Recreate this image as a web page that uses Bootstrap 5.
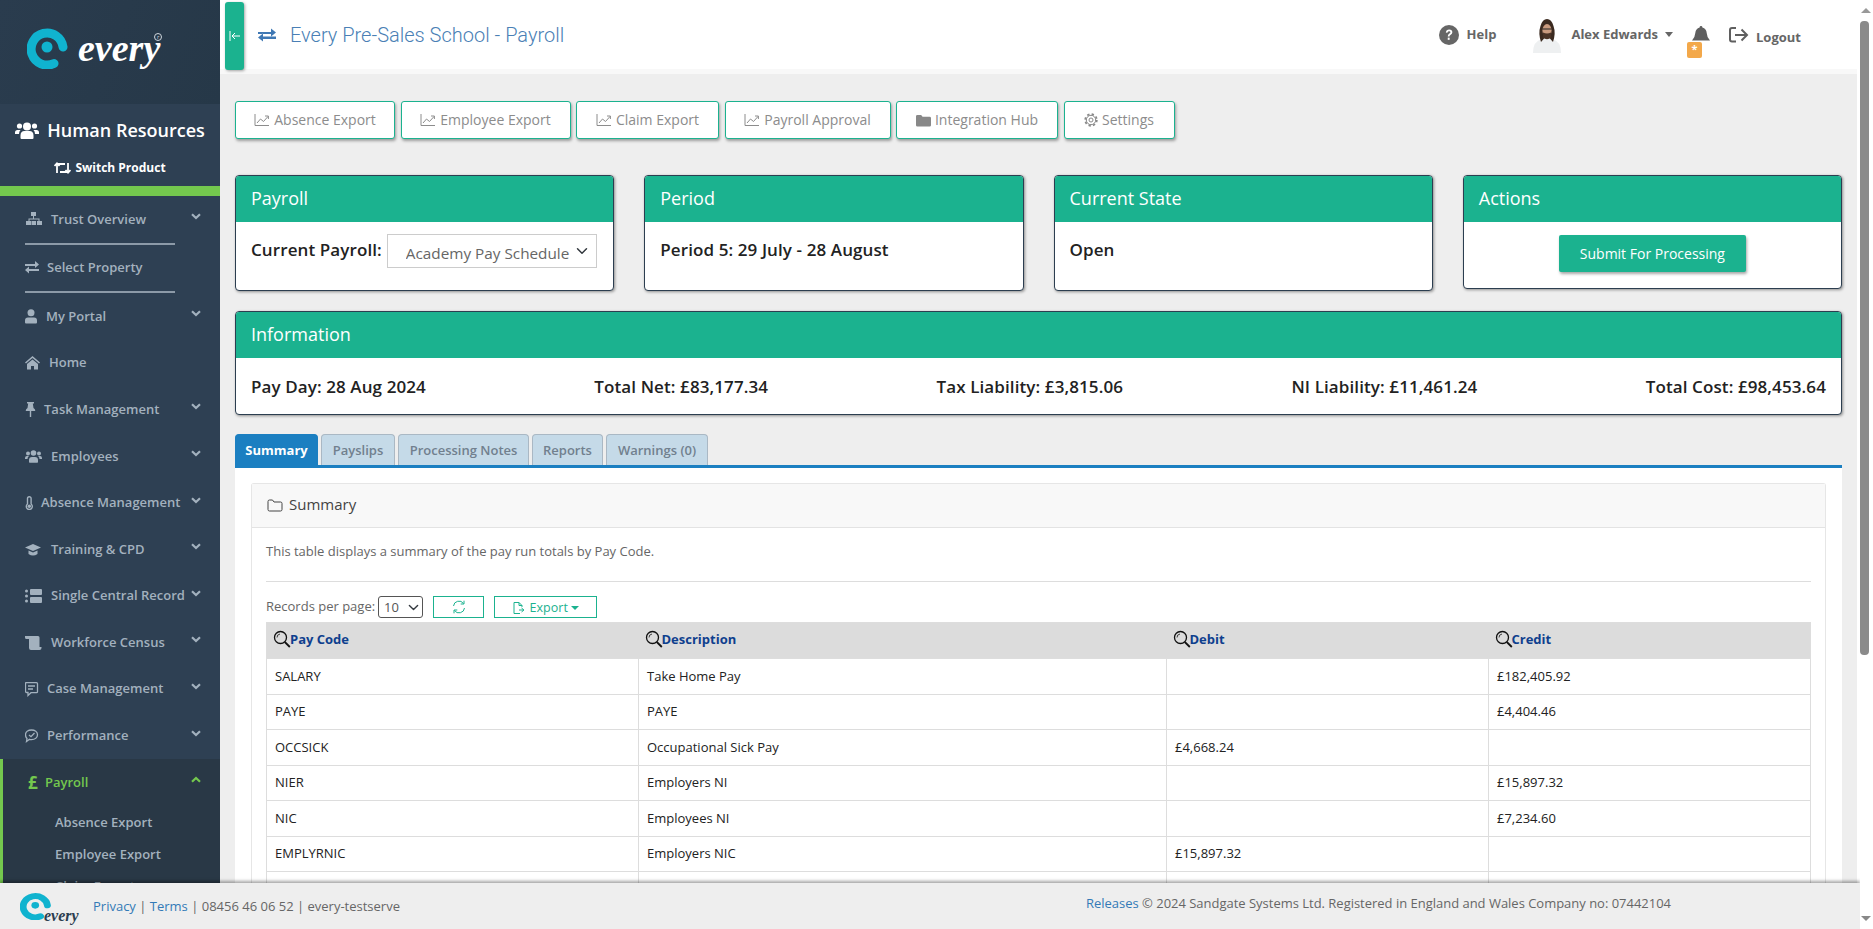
<!DOCTYPE html>
<html lang="en">
<head>
<meta charset="utf-8">
<title>Payroll</title>
<link href="https://cdn.jsdelivr.net/npm/bootstrap@5.3.0/dist/css/bootstrap.min.css" rel="stylesheet">
<style>
html,body{height:100%;overflow:hidden}
body{font-family:"Open Sans","Liberation Sans",sans-serif;background:#fff;color:#333}
.shell{height:929px}
.app{width:1860px;height:929px}
.upper{height:883px;overflow:hidden}
.sbar{width:13px;background:#fff;position:relative}
.sb-up,.sb-dn{width:0;height:0;border-left:5px solid transparent;border-right:5px solid transparent;position:absolute;left:1px}
.sb-up{top:8px;border-bottom:5px solid #999}
.sb-dn{bottom:8px;border-top:5px solid #888}
.sb-th{position:absolute;left:0;top:21px;width:9px;height:634px;background:#8a8a8a;border-radius:4px}
.side{width:220px;background:#2e4053;flex:none}
.brand{height:104px;background:linear-gradient(110deg,#2a3c4e,#263848);padding:27px 0 0 27px}
.brand-t{font-family:"Liberation Serif",serif;font-style:italic;font-weight:700;font-size:38px;color:#fff;line-height:1;margin-left:9px;margin-top:2px}
.brand-r{font-size:6px;color:#cfd6dc;margin:6px 0 0 -6px;border:1px solid #cfd6dc;border-radius:50%;width:8px;height:8px;line-height:6px;text-align:center}
.prod{height:82px;text-align:center;color:#fff}
.prod-h{font-size:18px;font-weight:600;padding-top:11px;line-height:30px}
.prod-s{font-size:12px;font-weight:700;line-height:16px;margin-top:15px}
.gbar{height:10px;background:#74c84e}
.ni{height:46.6px;padding-left:25px;color:#a3b1be;font-size:13px;font-weight:600;position:relative}
.ni svg{flex:none}
.ni .chv{position:absolute;left:191px;top:17px}
.nrule{height:2px;width:150px;margin-left:25px;background:#8c9aa8}
.ni-act{background:#293846;border-left:3px solid #74c84e;height:200px}
.ni-act .ni{padding-left:25px;color:#74c84e}
.ni-act .chv{left:188px}
.pound{font-size:17px;font-weight:700;width:17px;margin-right:0}
.sub-i{padding-left:52px;height:32px;line-height:32px;font-size:13px;font-weight:600;color:#a3b1be}
.mainc{background:#eee;position:relative;margin-right:4px}
.topb{height:74px;background:#fff;border-bottom:5px solid #f8f8f8;padding-right:56px}
.tog{width:19px;height:68px;margin:2px 0 0 5px;background:#1bb28f;border-radius:3px;box-shadow:1px 1px 3px rgba(0,0,0,.35);border:0;padding:0}
.xch-i{color:#3f78b4;margin-left:14px}
.ttl{font-family:Roboto,"Liberation Sans",sans-serif;font-weight:300;font-size:20px;color:#4a7fb5;margin-left:14px;line-height:1}
.tp-t{font-size:13px;font-weight:700;color:#666}
.m-help{margin-right:36px}
.m-av{margin-right:9px}
.m-user{margin-right:19px}
.m-bell{margin-right:19px;position:relative}
.bdg{position:absolute;left:-5px;top:16px;width:15px;height:16px;background:#f3a84a;border-radius:2px;color:#fff;font-size:11px;font-weight:700;line-height:14px;text-align:center}
.caret-d{width:0;height:0;border-left:4px solid transparent;border-right:4px solid transparent;border-top:5px solid #666;margin-left:7px}
.logout-t{margin-left:7px;padding-top:7px}
.bodyw{padding:0 15px}
.actrow{padding-top:27px;height:101px}
.abtn{background:#fff;border:1px solid #1bb28f;border-radius:3px;box-shadow:1px 2px 3px rgba(0,0,0,.35);color:#8c8c8c;font-size:14px;height:38px;padding:0;line-height:34px;margin-right:5.5px;flex:none}
.abtn svg{margin-right:4px;vertical-align:-2px}
.w1{width:160px}.w2{width:170px}.w3{width:143px}.w4{width:166px}.w5{width:162px}.w6{width:111px}
.crow{--bs-gutter-x:30px}
.pcard{border:1px solid #2c3e50;border-radius:4px;box-shadow:1px 1px 3px rgba(0,0,0,.4);overflow:hidden;background:#fff}
.pcard .card-header{background:#1bb28f;color:#fff;border:0;border-radius:0;height:46px;padding:0 15px;font-size:18px;line-height:44px}
.pcard .card-body{padding:16px 15px 0;font-size:17px;font-weight:600;color:#222;line-height:24px;height:68px;letter-spacing:.1px}
.pcard .act-b{height:66px;padding:13px 0 0;text-align:center}
.lbl{margin-right:5px}
.psel{width:210px;height:34px;border:1px solid #ccc;border-radius:0;padding:5px 0 1px 18px;font-size:15.3px;font-weight:400;color:#666;background-position:right 8px center;background-size:12px;letter-spacing:0;margin-top:-4px;line-height:24px;flex:none}
.subbtn{background:#1bb28f;color:#fff;border:0;border-radius:2px;width:187px;height:37px;font-size:14px;font-weight:500;box-shadow:1px 2px 3px rgba(0,0,0,.35);padding:0}
.infoc{margin-top:20px}
.infoc .card-body{height:56px;padding-top:17px}
.tabsw{margin-top:19px;border-bottom:3px solid #1b7fc1;height:34px;gap:3px}
.tabi{height:31px;background:#c5dae8;border:1px solid #aab8c4;border-bottom:0;border-radius:4px 4px 0 0;color:#71808e;font-size:13px;font-weight:600;line-height:30px;text-align:center}
.tabi.on{background:#1b7fc1;color:#fff;font-weight:700;border-color:#1b7fc1}
.t1{width:83px}.t2{width:74px}.t3{width:131px}.t4{width:71px}.t5{width:102px}
.panew{background:#fff;padding:15px 16px 0;height:600px}
.ipanel{border:1px solid #e6e6e6;border-radius:3px 3px 0 0;border-bottom:0}
.ipanel .card-header{height:44px;background:#f8f8f8;border-bottom:1px solid #e3e3e3;padding:0 15px;font-size:15px;font-weight:500;color:#444;line-height:41px;border-radius:0}
.ipanel .card-header svg{margin-right:6px;vertical-align:-2px}
.ipanel .card-body{padding:14px 14px 0}
.intro{font-size:13px;color:#666;line-height:18px;margin:0 0 21px}
.ihr{margin:0 0 14px;border-top:1px solid #ddd;opacity:1}
.tool{font-size:13px;color:#666;height:22px;margin-bottom:4px}
.rsel{width:45px;height:22px;border:1px solid #555;border-radius:3px;padding:0 0 0 5px;font-size:13px;color:#555;background-position:right 3px center;background-size:11px;margin-left:3px;line-height:18px}
.tbtn{height:22px;background:#fff;border:1px solid #1bb28f;border-radius:0;color:#1bb28f;font-size:12.5px;padding:0;line-height:19px}
.tb1{width:51px;margin-left:10px}.tb2{width:103px;margin-left:10px}
.tcarg{width:0;height:0;border-left:4px solid transparent;border-right:4px solid transparent;border-top:4px solid #1bb28f;display:inline-block;vertical-align:2px;margin-left:3px}
.ptable{table-layout:fixed;width:1544px;margin:0;font-size:13px;border:1px solid #ddd;--bs-table-border-color:#ddd}
.ptable th{background:#dcdcdc;height:36px;padding:0 8px 2px;font-weight:700;color:#0f3f8e;vertical-align:middle;border:0}
.ptable th svg{vertical-align:-4px;margin:0 -1px 0 -2px}
.ptable td{height:35.5px;padding:0 8px;color:#222;vertical-align:middle;border:1px solid #ddd}
.c1{width:372px}.c2{width:528px}.c3{width:322px}.c4{width:322px}
.foot{height:46px;background:#eee;box-shadow:0 -2px 3px rgba(0,0,0,.35);position:relative;font-size:13px;color:#666;padding:0 189px 4px 20px}
.foot a{color:#337ab7;text-decoration:none}
.fring{margin-top:4px}
.flogo-t{font-family:"Liberation Serif",serif;font-style:italic;font-weight:700;font-size:16px;color:#2c3e50;line-height:1;margin:24px 0 0 -8px;width:38px}
.fleft{margin:5px 0 0 11px}
.rtxt{font-size:12.98px}
</style>
</head>
<body>
<svg width="0" height="0" class="d-block">
<defs>
<symbol id="chv" viewBox="0 0 10 7"><path d="M1 1.2 5 5 9 1.2" fill="none" stroke="currentColor" stroke-width="2.2"/></symbol>
<symbol id="chart" viewBox="0 0 16 14"><path d="M1 1v11.5h14" fill="none" stroke="currentColor"/><path d="M3 10l3.5-4 3 2.5L14 3.5M11 3h3.4v3" fill="none" stroke="currentColor"/></symbol>
<symbol id="xch" viewBox="0 0 18 16"><path d="M0 5h13V1.5L18 5.5l-5 4V7H0zM18 9.5H5V6.5L0 10.500l5 4V12h13z" fill="currentColor"/></symbol>
<symbol id="mag" viewBox="0 0 18 18"><circle cx="7.500" cy="7.500" r="6" fill="none" stroke="#111" stroke-width="1.300"/><path d="M11.800 12l5 5" stroke="#111" stroke-width="1.800"/><path d="M4 7.500a3.500 3.500 0 0 1 3-3.500" fill="none" stroke="#111" stroke-width=".8"/></symbol>
<symbol id="folder" viewBox="0 0 16 13"><path d="M1 2.500q0-1.500 1.500-1.500h3l1.500 2h6.500q1.500 0 1.500 1.500v6q0 1.500-1.500 1.500h-11Q1 12 1 10.500z" fill="none" stroke="currentColor"/></symbol>
</defs>
</svg>
<div class="d-flex shell">
<div class="app d-flex flex-column">
<div class="upper d-flex">
<aside class="side">
<div class="brand d-flex align-items-start">
<svg width="42" height="42" viewBox="0 0 42 42"><path d="M27 36.500A16 16 0 1 1 36 20" fill="none" stroke="#10b3cf" stroke-width="9" stroke-linecap="round"/><circle cx="20" cy="20" r="5.500" fill="#10b3cf"/></svg>
<div class="brand-t">every</div><div class="brand-r">r</div>
</div>
<div class="prod">
<div class="prod-h d-flex align-items-center justify-content-center gap-2"><svg width="24" height="18" viewBox="0 0 24 18" fill="#fff"><circle cx="12" cy="5.500" r="4"/><circle cx="4.500" cy="5" r="2.600"/><circle cx="19.500" cy="5" r="2.600"/><path d="M5.500 17v-2.500q0-4.500 4-4.500h5q4 0 4 4.500V17q0 1-1 1h-11q-1 0-1-1zM0 13v-1.500q0-2.500 2.500-2.500h3q-1.500 1.500-1.500 4zM24 13v-1.500q0-2.500-2.500-2.500h-3q1.500 1.500 1.500 4z"/></svg>Human Resources</div>
<div class="prod-s d-flex align-items-center justify-content-center gap-1"><svg width="17" height="12" viewBox="0 0 17 12" fill="none" stroke="#fff" stroke-width="1.800"><path d="M3 11V2h8M14 1v9H6"/><path d="M.5 4 3 1.300 5.500 4M11.500 8 14 10.700 16.500 8"/></svg>Switch Product</div>
</div>
<div class="gbar"></div>
<nav>
<div class="ni d-flex align-items-center"><svg width="26" height="16" viewBox="0 0 26 16" fill="currentColor"><rect x="6" y="1" width="5" height="4"/><path d="M8 5h1v2.500h5.500V10h-1V8.500h-9V10h-1V7.500H8z"/><rect x="1" y="10" width="5" height="4"/><rect x="6.500" y="10" width="4.500" height="4"/><rect x="12" y="10" width="5" height="4"/></svg>Trust Overview<svg class="chv" width="10" height="7"><use href="#chv"/></svg></div>
<div class="nrule"></div>
<div class="ni d-flex align-items-center"><svg width="22" height="14" viewBox="0 0 22 14" fill="currentColor"><path d="M0 3h10V0l4 3.500-4 3.500V5H0zM14 8H4V5.500L0 9l4 3.500V10h10z"/></svg>Select Property</div>
<div class="nrule"></div>
<div class="ni d-flex align-items-center"><svg width="21" height="15" viewBox="0 0 21 15" fill="currentColor"><circle cx="6" cy="3.700" r="3.500"/><path d="M0 13.500v-2q0-3 3-3h6q3 0 3 3v2q0 1-1 1H1q-1 0-1-1z"/></svg>My Portal<svg class="chv" width="10" height="7"><use href="#chv"/></svg></div>
<div class="ni d-flex align-items-center"><svg width="24" height="14" viewBox="0 0 24 14" fill="currentColor"><path d="M7.500 0 15 6.500l-1 1-6.500-5.500L1 7.500l-1-1zM2 8l5.500-4.500L13 8v5.500H9V10H6v3.500H2z"/></svg>Home</div>
<div class="ni d-flex align-items-center"><svg width="19" height="15" viewBox="0 0 19 15" fill="currentColor"><path d="M2 0h7v1.500H7.800L8.500 6q1.800 1 1.800 3H6.200v6H4.800V9H.7q0-2 1.800-3l.7-4.500H2z"/></svg>Task Management<svg class="chv" width="10" height="7"><use href="#chv"/></svg></div>
<div class="ni d-flex align-items-center"><svg width="26" height="13" viewBox="0 0 26 13" fill="currentColor"><circle cx="8.500" cy="3" r="2.800"/><circle cx="3" cy="3.500" r="2"/><circle cx="14" cy="3.500" r="2"/><path d="M4 12v-2q0-3 3-3h3q3 0 3 3v2q0 .7-.7.7H4.700Q4 12.700 4 12zM0 9V8q0-2 2-2h2q-1.500 1-1.500 3zM17 9V8q0-2-2-2h-2q1.500 1 1.500 3z"/></svg>Employees<svg class="chv" width="10" height="7"><use href="#chv"/></svg></div>
<div class="ni d-flex align-items-center"><svg width="16" height="14" viewBox="0 0 16 14"><path d="M2.500 2.500a1.800 1.800 0 0 1 3.600 0V8a3 3 0 1 1-3.600 0z" fill="none" stroke="currentColor" stroke-width="1.400"/><circle cx="4.300" cy="10.300" r="1.700" fill="currentColor"/></svg>Absence Management<svg class="chv" width="10" height="7"><use href="#chv"/></svg></div>
<div class="ni d-flex align-items-center"><svg width="26" height="13" viewBox="0 0 26 13" fill="currentColor"><path d="M8 1 16 4.500 8 8 0 4.500zM3.500 7.500 8 9.500l4.500-2V11q-4.500 3-9 0z"/></svg>Training &amp; CPD<svg class="chv" width="10" height="7"><use href="#chv"/></svg></div>
<div class="ni d-flex align-items-center"><svg width="26" height="14" viewBox="0 0 26 14" fill="currentColor"><circle cx="1.500" cy="2" r="1.500"/><circle cx="1.500" cy="7" r="1.500"/><circle cx="1.500" cy="12" r="1.500"/><rect x="5" y="0" width="12" height="6" rx="1"/><rect x="5" y="8" width="12" height="6" rx="1"/></svg>Single Central Record<svg class="chv" width="10" height="7"><use href="#chv"/></svg></div>
<div class="ni d-flex align-items-center"><svg width="26" height="14" viewBox="0 0 26 14" fill="currentColor"><path d="M0 0h13q1.500 0 1.500 1.500V11h2v1q0 2-2 2H6q-2 0-2-2V3H1.500Q0 3 0 1.500z"/></svg>Workforce Census<svg class="chv" width="10" height="7"><use href="#chv"/></svg></div>
<div class="ni d-flex align-items-center"><svg width="22" height="15" viewBox="0 0 22 15" fill="none" stroke="currentColor" stroke-width="1.300"><path d="M1.500.700h10q1 0 1 1v8q0 1-1 1H6L3 13.500v-3H1.500q-1 0-1-1v-8q0-1 1-1z"/><path d="M3 4h7M3 7h5"/></svg>Case Management<svg class="chv" width="10" height="7"><use href="#chv"/></svg></div>
<div class="ni d-flex align-items-center"><svg width="22" height="14" viewBox="0 0 22 14" fill="none" stroke="currentColor" stroke-width="1.300"><path d="M6.500 1c3.300 0 6 2 6 4.800s-2.700 4.800-6 4.800q-1 0-2-.3L1.500 12.500 2 9.500Q.5 8 .5 5.800C.5 3 3.200 1 6.500 1z"/><path d="M4 6l2 1.700L9.500 4"/></svg>Performance<svg class="chv" width="10" height="7"><use href="#chv"/></svg></div>
<div class="ni-act">
<div class="ni d-flex align-items-center"><span class="pound">£</span>Payroll<svg class="chv" width="10" height="7"><use href="#chv" transform="rotate(180 5 3.500)"/></svg></div>
<div class="sub-i">Absence Export</div>
<div class="sub-i">Employee Export</div>
<div class="sub-i">Claim Export</div>
</div>
</nav>
</aside>
<main class="mainc flex-grow-1">
<header class="topb d-flex align-items-center">
<button class="tog align-self-start d-flex align-items-center justify-content-center"><svg width="12" height="10" viewBox="0 0 12 10" fill="none" stroke="#fff"><path d="M1 0v10M11 5H3M6 2 3 5l3 3"/></svg></button>
<svg class="xch-i" width="18" height="16" viewBox="0 0 18 16"><use href="#xch"/></svg>
<div class="ttl flex-grow-1">Every Pre-Sales School - Payroll</div>
<svg class="me-2" width="20" height="20" viewBox="0 0 19 19"><circle cx="9.500" cy="9.500" r="9.500" fill="#666"/><path d="M6.500 7.300q.3-3 3.200-3 3 .1 3 2.700 0 1.700-1.800 2.500-.9.400-.9 1.500H8.300q0-2.300 1.600-3 1-.4 1-1-.1-1.100-1.300-1.100-1.100 0-1.400 1.300z" fill="#fff"/><rect x="8.300" y="12" width="1.800" height="2.100" fill="#fff"/></svg>
<span class="tp-t m-help">Help</span>
<svg class="m-av" width="30" height="36" viewBox="0 0 30 36"><path d="M1 36q0-12 9-14h10q9 2 9 14z" fill="#eef0f1"/><path d="M9 25Q6 16 8.500 9 10.500 2 15 2t6.500 7q2.500 7-.500 16l-3.500-4h-5z" fill="#3b2a20"/><ellipse cx="15" cy="13.500" rx="4.600" ry="6.500" fill="#c99a7e"/><path d="M11 15.500q4 2 8 0l.3 5q-4.300 3.500-8.600 0z" fill="#4a3326"/><rect x="10.500" y="11.500" width="9" height="1" fill="#222"/></svg>
<span class="tp-t">Alex Edwards</span><span class="caret-d m-user"></span>
<span class="m-bell d-inline-flex"><svg width="18" height="18" viewBox="0 0 18 18" fill="#5f5f5f"><path d="M9 0q1.400 0 1.400 1.400 4 1 4.300 5.600.2 4.500 3.300 7.500H0Q3 11.500 3.300 7 3.700 2.400 7.600 1.400 7.600 0 9 0z"/></svg><span class="bdg">*</span></span>
<svg width="20" height="16" viewBox="0 0 20 16" fill="none" stroke="#5f5f5f" stroke-width="2"><path d="M7 1H3Q1 1 1 3v9.500q0 2 2 2h4M6 8h11M12.500 2.500 18 8l-5.500 5.500"/></svg>
<span class="tp-t logout-t">Logout</span>
</header>
<div class="bodyw">
<div class="actrow d-flex align-items-start">
<button class="abtn w1"><svg width="16" height="14"><use href="#chart"/></svg>Absence Export</button>
<button class="abtn w2"><svg width="16" height="14"><use href="#chart"/></svg>Employee Export</button>
<button class="abtn w3"><svg width="16" height="14"><use href="#chart"/></svg>Claim Export</button>
<button class="abtn w4"><svg width="16" height="14"><use href="#chart"/></svg>Payroll Approval</button>
<button class="abtn w5"><svg width="15" height="13" viewBox="0 0 16 13"><path d="M0 2q0-1.500 1.500-1.500h4L7 2.500h7.500Q16 2.500 16 4v7.500q0 1.500-1.500 1.500h-13Q0 13 0 11.500z" fill="#888"/></svg>Integration Hub</button>
<button class="abtn w6"><svg width="14" height="14" viewBox="0 0 14 14" fill="none" stroke="#888"><circle cx="7" cy="7" r="2"/><circle cx="7" cy="7" r="4.700"/><circle cx="7" cy="7" r="5.800" stroke-width="1.800" stroke-dasharray="2.300 2.250"/></svg>Settings</button>
</div>
<div class="row crow align-items-start">
<div class="col-3"><div class="card pcard"><div class="card-header">Payroll</div><div class="card-body d-flex align-items-start"><span class="lbl">Current Payroll:</span><select class="form-select psel"><option>Academy Pay Schedule</option></select></div></div></div>
<div class="col-3"><div class="card pcard"><div class="card-header">Period</div><div class="card-body">Period 5: 29 July - 28 August</div></div></div>
<div class="col-3"><div class="card pcard"><div class="card-header">Current State</div><div class="card-body">Open</div></div></div>
<div class="col-3"><div class="card pcard"><div class="card-header">Actions</div><div class="card-body act-b"><button class="btn subbtn">Submit For Processing</button></div></div></div>
</div>
<div class="card pcard infoc"><div class="card-header">Information</div><div class="card-body d-flex justify-content-between"><span>Pay Day: 28 Aug 2024</span><span>Total Net: £83,177.34</span><span>Tax Liability: £3,815.06</span><span>NI Liability: £11,461.24</span><span>Total Cost: £98,453.64</span></div></div>
<div class="tabsw d-flex">
<div class="tabi on t1">Summary</div><div class="tabi t2">Payslips</div><div class="tabi t3">Processing Notes</div><div class="tabi t4">Reports</div><div class="tabi t5">Warnings (0)</div>
</div>
<div class="panew">
<div class="card ipanel">
<div class="card-header"><svg width="16" height="13"><use href="#folder"/></svg>Summary</div>
<div class="card-body">
<p class="intro">This table displays a summary of the pay run totals by Pay Code.</p>
<hr class="ihr">
<div class="tool d-flex align-items-center">Records per page:<select class="form-select rsel"><option>10</option></select>
<button class="tbtn tb1 d-flex align-items-center justify-content-center"><svg width="14" height="14" viewBox="0 0 14 14" fill="none" stroke="#1bb28f"><path d="M1.500 6a5.500 5.500 0 0 1 10-2.500M12.500 8a5.500 5.500 0 0 1-10 2.500"/><path d="M12 .7v3.300H8.700M2 13.300V10h3.300"/></svg></button>
<button class="tbtn tb2"><svg width="14" height="14" viewBox="0 0 14 14" fill="none" stroke="#1bb28f"><path d="M8 12.500H2v-11h5l3 3V6"/><path d="M7 1.500v3h3M7 9h4M9.500 7 12 9l-2.500 2"/></svg> Export<span class="tcarg"></span></button>
</div>
<table class="table ptable">
<colgroup><col class="c1"><col class="c2"><col class="c3"><col class="c4"></colgroup>
<thead><tr><th><svg width="18" height="18"><use href="#mag"/></svg>Pay Code</th><th><svg width="18" height="18"><use href="#mag"/></svg>Description</th><th><svg width="18" height="18"><use href="#mag"/></svg>Debit</th><th><svg width="18" height="18"><use href="#mag"/></svg>Credit</th></tr></thead>
<tbody>
<tr><td>SALARY</td><td>Take Home Pay</td><td></td><td>£182,405.92</td></tr>
<tr><td>PAYE</td><td>PAYE</td><td></td><td>£4,404.46</td></tr>
<tr><td>OCCSICK</td><td>Occupational Sick Pay</td><td>£4,668.24</td><td></td></tr>
<tr><td>NIER</td><td>Employers NI</td><td></td><td>£15,897.32</td></tr>
<tr><td>NIC</td><td>Employees NI</td><td></td><td>£7,234.60</td></tr>
<tr><td>EMPLYRNIC</td><td>Employers NIC</td><td>£15,897.32</td><td></td></tr>
<tr><td>&nbsp;</td><td></td><td></td><td></td></tr>
</tbody>
</table>
</div>
</div>
</div>
</div>
</main>
</div>
<footer class="foot d-flex align-items-center justify-content-between">
<div class="d-flex align-items-center">
<svg class="fring" width="32" height="28" viewBox="0 0 42 42" preserveAspectRatio="none"><path d="M27 36.500A16 16 0 1 1 36 20" fill="none" stroke="#10b3cf" stroke-width="9" stroke-linecap="round"/><circle cx="20" cy="20" r="5" fill="#10b3cf"/></svg>
<span class="flogo-t">every</span>
<span class="fleft"><a href="#">Privacy</a> | <a href="#">Terms</a> | 08456 46 06 52 | every-testserve</span>
</div>
<div class="rtxt"><a href="#">Releases</a> © 2024 Sandgate Systems Ltd. Registered in England and Wales Company no: 07442104</div>
</footer>
</div>
<div class="sbar"><div class="sb-up"></div><div class="sb-th"></div><div class="sb-dn"></div></div>
</div>
<script src="https://cdn.jsdelivr.net/npm/bootstrap@5.3.0/dist/js/bootstrap.bundle.min.js"></script>
</body>
</html>
